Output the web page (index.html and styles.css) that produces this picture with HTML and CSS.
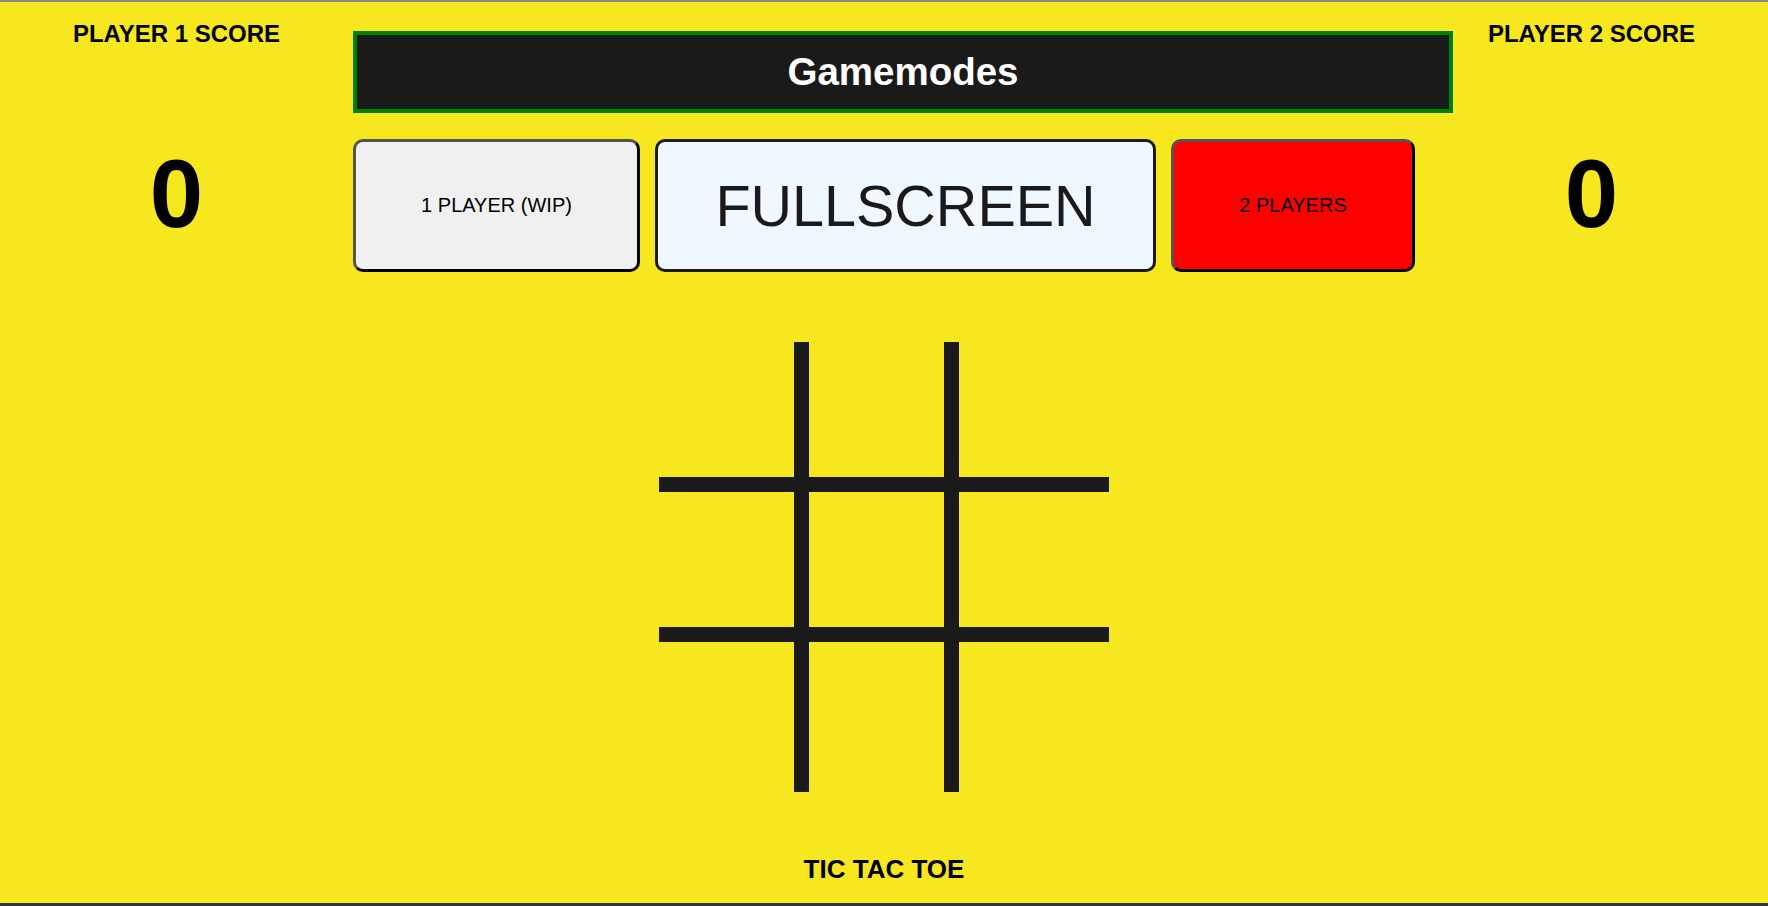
FILE: index.html
```html
<!DOCTYPE html>
<html lang="en">
<head>
    <meta charset="UTF-8">
    <meta name="viewport" content="width=device-width, initial-scale=1.0">
    <title>Tic Tac Toe</title>
    <link rel="stylesheet" href="styles.css">
</head>
<body>
    <div class="layout">
        <div class="score">
            <h2>PLAYER 1 SCORE</h2>
            <div class="points" id="scoreOne">0</div>
        </div>

        <div class="center">
            <h1 class="modes-title">Gamemodes</h1>
            <div class="mode-buttons">
                <button class="mode-btn one-player">1 PLAYER (WIP)</button>
                <button class="fullscreen-btn">FULLSCREEN</button>
                <button class="mode-btn two-player">2 PLAYERS</button>
            </div>
            <div class="board">
                <div class="cell"></div>
                <div class="cell"></div>
                <div class="cell"></div>
                <div class="cell"></div>
                <div class="cell"></div>
                <div class="cell"></div>
                <div class="cell"></div>
                <div class="cell"></div>
                <div class="cell"></div>
            </div>
            <h2 class="game-title">TIC TAC TOE</h2>
        </div>

        <div class="score">
            <h2>PLAYER 2 SCORE</h2>
            <div class="points" id="scoreTwo">0</div>
        </div>
    </div>
</body>
</html>
```
FILE: styles.css
```css
body {
    font-family: "Liberation Sans", Arial, sans-serif;
    background-color: #f6e71e;
    color: #000;
    margin: 0;
    height: 906px;
    box-sizing: border-box;
    border-top: 2px solid #8a8a8a;
    border-bottom: 3px solid #2d3540;
    overflow: hidden;
}

.layout {
    display: grid;
    grid-template-columns: 353px 1062px 353px;
}

.score {
    text-align: center;
    padding-top: 18px;
}

.score h2 {
    margin: 0;
    font-size: 24px;
    line-height: 27px;
    font-weight: bold;
}

.points {
    margin-top: 93px;
    font-size: 96px;
    line-height: 107px;
    font-weight: bold;
}

.center {
    display: flex;
    flex-direction: column;
}

.modes-title {
    width: 1100px;
    height: 82px;
    box-sizing: border-box;
    margin: 29px 0 0 0;
    display: flex;
    align-items: center;
    justify-content: center;
    background-color: #1a1a1a;
    border: 4px solid #008000;
    color: #fff;
    font-size: 38.5px;
}

.mode-buttons {
    display: flex;
    margin-top: 26px;
    height: 133px;
}

.mode-btn,
.fullscreen-btn {
    height: 133px;
    box-sizing: border-box;
    border-radius: 10px;
    font-family: "Liberation Sans", Arial, sans-serif;
    color: #000;
    padding: 0;
    cursor: pointer;
}

.mode-btn {
    border: 3px outset #000;
    font-size: 20px;
}

.one-player {
    width: 287px;
    background-color: #f0f0f0;
}

.two-player {
    width: 244px;
    background-color: #ff0000;
}

.fullscreen-btn {
    width: 501px;
    margin: 0 15px;
    border: 3px solid #1a1a1a;
    background-color: #f0f8ff;
    color: #1a1a1a;
    font-size: 57.5px;
}

.board {
    display: grid;
    grid-template-columns: repeat(3, 150px);
    grid-template-rows: repeat(3, 150px);
    margin: 70px auto 0;
}

.cell {
    box-sizing: border-box;
}

.cell:nth-child(3n+1),
.cell:nth-child(3n+2) {
    border-right: 15px solid #1a1a1a;
}

.cell:nth-child(-n+6) {
    border-bottom: 15px solid #1a1a1a;
}

.game-title {
    margin: 62px 0 0 0;
    text-align: center;
    font-size: 26px;
    line-height: 30px;
}
```
